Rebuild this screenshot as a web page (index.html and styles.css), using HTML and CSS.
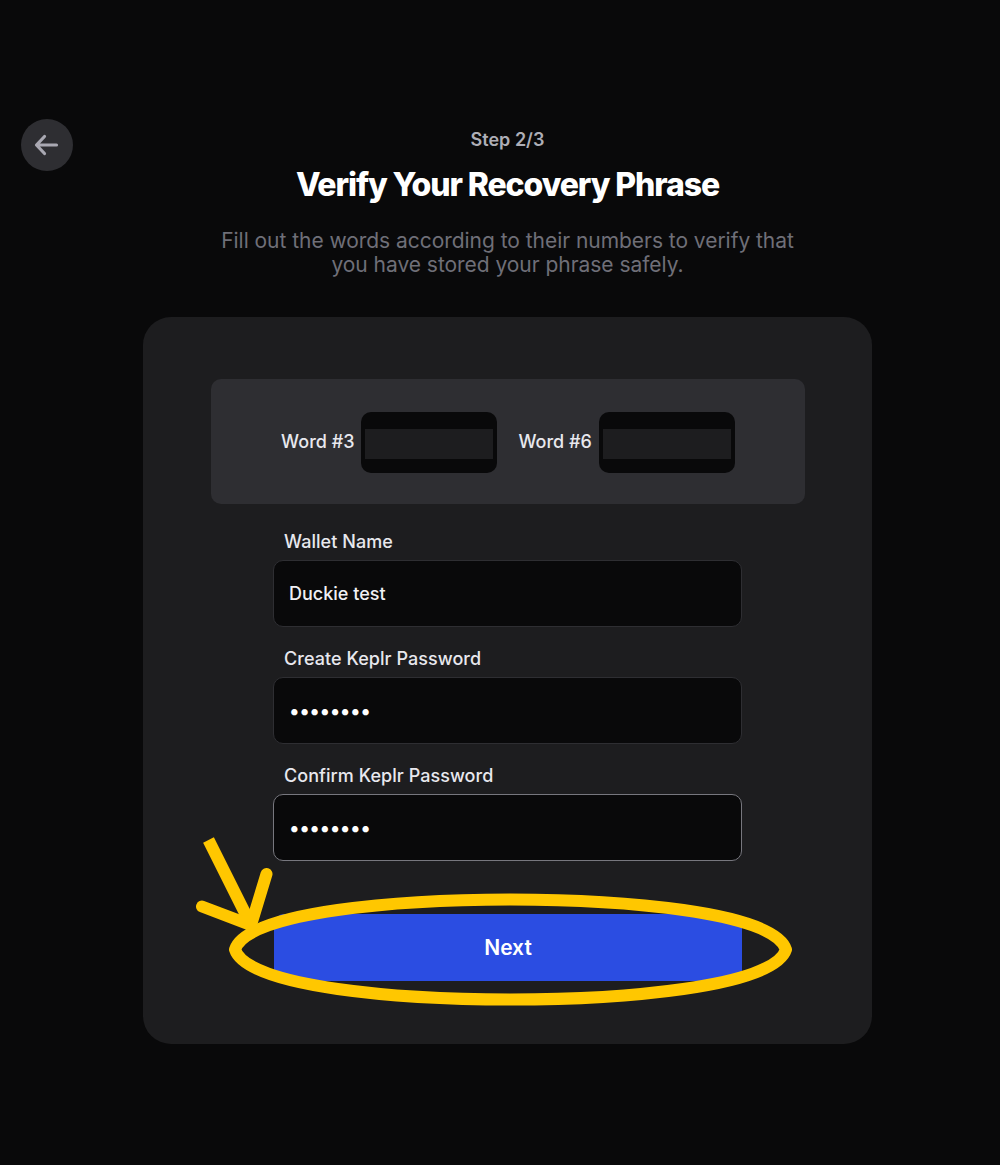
FILE: index.html
```html
<!DOCTYPE html>
<html lang="en">
<head>
<meta charset="utf-8">
<title>Verify Your Recovery Phrase</title>
<link rel="stylesheet" href="styles.css">
</head>
<body>
<main class="page">
  <button class="back" type="button" aria-label="Back">
    <svg width="26" height="26" viewBox="0 0 26 26" fill="none" stroke="#a9a8b2" stroke-width="3.200" stroke-linecap="round" stroke-linejoin="round"><path d="M22.500 13H2.500M10.500 4.500L2.500 13l8 8.500"/></svg>
  </button>
  <header class="head">
    <div class="step">Step 2/3</div>
    <h1 class="title">Verify Your Recovery Phrase</h1>
    <p class="sub">Fill out the words according to their numbers to verify that<br>you have stored your phrase safely.</p>
  </header>
  <section class="card">
    <div class="words">
      <div class="word"><span class="word-label">Word #3</span><div class="word-box"><div class="word-fill"></div></div></div>
      <div class="word"><span class="word-label">Word #6</span><div class="word-box"><div class="word-fill"></div></div></div>
    </div>
    <div class="form">
      <div class="field">
        <label class="label">Wallet Name</label>
        <div class="input">Duckie test</div>
      </div>
      <div class="field">
        <label class="label">Create Keplr Password</label>
        <div class="input dots">••••••••</div>
      </div>
      <div class="field">
        <label class="label">Confirm Keplr Password</label>
        <div class="input dots focus">••••••••</div>
      </div>
      <button class="next" type="button">Next</button>
    </div>
  </section>
  <svg class="mark" width="1000" height="1165" viewBox="0 0 1000 1165" fill="none" aria-hidden="true">
    <path d="M235 949.500C247 911 405 899.500 510.500 899.500C616 899.500 774 911 786 949.500C774 988 616 999.500 510.500 999.500C405 999.500 247 988 235 949.500Z" stroke="#ffc700" stroke-width="12" stroke-linejoin="round"/>
    <path d="M208.500 840L251 925" stroke="#ffc700" stroke-width="12"/>
    <path d="M266.500 874L251 925L202 906.500" stroke="#ffc700" stroke-width="12" stroke-linecap="round" stroke-linejoin="miter"/>
  </svg>
</main>
</body>
</html>
```
FILE: styles.css
```css
* { box-sizing: border-box; }
html, body { margin: 0; padding: 0; }
body {
  background: #09090a;
  font-family: Inter, "Liberation Sans", sans-serif;
  color: #e8e8ee;
}
.page {
  position: relative;
  width: 1000px;
  height: 1165px;
  padding: 130px 0 0 143px;
  overflow: hidden;
}
.back {
  position: absolute;
  left: 21px;
  top: 119px;
  width: 52px;
  height: 52px;
  border: 0;
  border-radius: 50%;
  background: #2e2e32;
  padding: 0;
  display: flex;
  align-items: center;
  justify-content: center;
}
.head {
  width: 729px;
  text-align: center;
}
.step {
  font-size: 18px;
  line-height: 20px;
  font-weight: 600;
  color: #aeaeb6;
}
.title {
  margin: 17px 0 0;
  font-size: 32px;
  line-height: 36px;
  font-weight: 800;
  letter-spacing: -1.100px;
  color: #fff;
}
.sub {
  margin: 26px 0 0;
  font-size: 21px;
  line-height: 23.500px;
  font-weight: 400;
  letter-spacing: -0.040px;
  color: #6f6f78;
}
.card {
  margin-top: 41px;
  width: 729px;
  height: 727px;
  padding: 62px 67px 0 68px;
  background: #1d1d1f;
  border-radius: 28px;
}
.words {
  height: 125px;
  background: #2e2e32;
  border-radius: 10px;
  display: flex;
  align-items: center;
  justify-content: center;
  gap: 21px;
  padding-top: 2px;
}
.word {
  display: flex;
  align-items: center;
  gap: 7px;
}
.word-label {
  padding-bottom: 2px;
  font-size: 18px;
  font-weight: 500;
  color: #e8e8ee;
}
.word-box {
  width: 136px;
  height: 61px;
  background: #09090a;
  border-radius: 10px;
  padding: 17px 4px 14px;
}
.word-fill {
  height: 30px;
  background: #1d1d1f;
}
.form {
  width: 469px;
  margin: 26px 0 0 62px;
}
.field { margin-bottom: 20px; }
.label {
  display: block;
  padding-left: 11px;
  margin-bottom: 6px;
  font-size: 18px;
  line-height: 24px;
  font-weight: 500;
  letter-spacing: 0.050px;
  color: #e8e8ee;
}
.input {
  height: 67px;
  padding: 0 15px;
  display: flex;
  align-items: center;
  background: #09090a;
  border: 1px solid #2e2e32;
  border-radius: 10px;
  font-size: 18px;
  font-weight: 500;
  color: #f0f0f4;
}
.dots {
  font-size: 20px;
  letter-spacing: -0.500px;
  color: #fff;
}
.focus {
  border: 1.500px solid #77777e;
}
.next {
  display: block;
  width: 468px;
  height: 67px;
  margin: 53px 0 0 1px;
  border: 0;
  border-radius: 10px;
  background: #2b4de2;
  font-family: inherit;
  font-size: 21px;
  font-weight: 600;
  color: #fff;
}
.mark {
  position: absolute;
  left: 0;
  top: 0;
  pointer-events: none;
}
```
